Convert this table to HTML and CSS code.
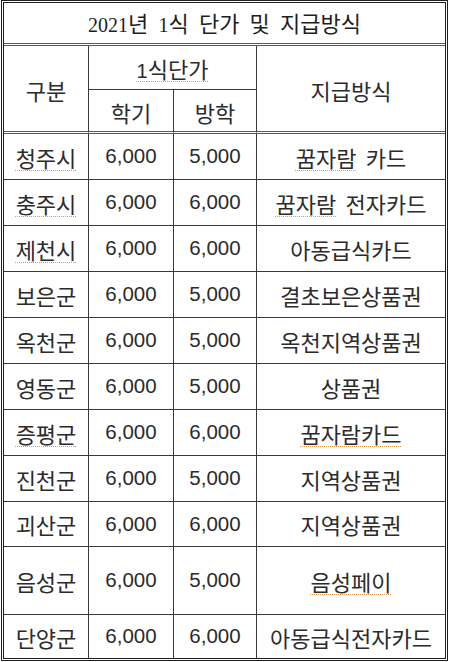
FILE: index.html
```html
<!DOCTYPE html>
<html lang="ko">
<head>
<meta charset="utf-8">
<title>2021년 1식 단가 및 지급방식</title>
<link rel="stylesheet" href="styles.css">
</head>
<body>
<div class="sheet">
  <div class="cell title"><span class="t"><span class="d">2021</span>년 <span class="d">1</span>식 단가 및 지급방식</span></div>
  <div class="cell head c1 span2r"><span>구분</span></div>
  <div class="cell head c23 sub"><span class="sp"><span class="n">1</span>식단가</span></div>
  <div class="cell head c4 span2r last"><span>지급방식</span></div>
  <div class="cell head c2 r3 hb"><span>학기</span></div>
  <div class="cell head c3 r3 hb"><span>방학</span></div>

  <div class="cell"><span class="sp">청주시</span></div>
  <div class="cell num">6,000</div>
  <div class="cell num">5,000</div>
  <div class="cell last"><span><span class="sp">꿈자람</span> 카드</span></div>

  <div class="cell"><span class="sp">충주시</span></div>
  <div class="cell num">6,000</div>
  <div class="cell num">6,000</div>
  <div class="cell last"><span><span class="sp">꿈자람</span> 전자카드</span></div>

  <div class="cell"><span class="sp">제천시</span></div>
  <div class="cell num">6,000</div>
  <div class="cell num">6,000</div>
  <div class="cell last"><span>아동급식카드</span></div>

  <div class="cell"><span>보은군</span></div>
  <div class="cell num">6,000</div>
  <div class="cell num">5,000</div>
  <div class="cell last"><span>결초보은상품권</span></div>

  <div class="cell"><span>옥천군</span></div>
  <div class="cell num">6,000</div>
  <div class="cell num">5,000</div>
  <div class="cell last"><span>옥천지역상품권</span></div>

  <div class="cell"><span>영동군</span></div>
  <div class="cell num">6,000</div>
  <div class="cell num">5,000</div>
  <div class="cell last"><span>상품권</span></div>

  <div class="cell"><span class="sp">증평군</span></div>
  <div class="cell num">6,000</div>
  <div class="cell num">6,000</div>
  <div class="cell last"><span class="sp">꿈자람카드</span></div>

  <div class="cell"><span>진천군</span></div>
  <div class="cell num">6,000</div>
  <div class="cell num">5,000</div>
  <div class="cell last"><span>지역상품권</span></div>

  <div class="cell"><span>괴산군</span></div>
  <div class="cell num">6,000</div>
  <div class="cell num">6,000</div>
  <div class="cell last"><span>지역상품권</span></div>

  <div class="cell"><span>음성군</span></div>
  <div class="cell num">6,000</div>
  <div class="cell num">5,000</div>
  <div class="cell last"><span class="sp">음성페이</span></div>

  <div class="cell bottom"><span>단양군</span></div>
  <div class="cell bottom num">6,000</div>
  <div class="cell bottom num">6,000</div>
  <div class="cell bottom last"><span>아동급식전자카드</span></div>
</div>
</body>
</html>
```
FILE: styles.css
```css
html, body {
  margin: 0;
  padding: 0;
  background: #ffffff;
}

.sheet {
  box-sizing: border-box;
  margin-left: 1px;
  width: 447px;
  height: 661px;
  border: 3px double #1e1e1e;
  display: grid;
  grid-template-columns: 85px 85px 83px 1fr;
  grid-template-rows: 43px 44px 44px repeat(8, 46px) 45px 68px 43px;
  font-family: "Noto Sans CJK KR", "Liberation Sans", sans-serif;
  font-size: 22px;
  color: #2b2b2b;
}

.cell {
  box-sizing: border-box;
  display: flex;
  align-items: center;
  justify-content: center;
  border-right: 1px solid #3a3a3a;
  border-bottom: 1px solid #3a3a3a;
  line-height: 1;
  word-spacing: 3px;
  white-space: nowrap;
}

.cell.num {
  font-family: "Liberation Sans", sans-serif;
  font-size: 20.5px;
}

.n {
  font-family: "Liberation Sans", sans-serif;
  font-size: 20px;
}

.cell.last {
  border-right: none;
}

.cell.bottom {
  border-bottom: none;
}

.title {
  grid-column: 1 / 5;
  border-right: none;
  border-bottom: 3px double #5a5a5a;
  color: #1e1e1e;
}

.t {
  word-spacing: 4px;
}

.d {
  font-family: "Liberation Serif", serif;
  font-size: 20px;
}

.head {
  padding-top: 2px;
}

.span2r {
  grid-row: 2 / 4;
  border-bottom: 3px double #5a5a5a;
}

.c1 { grid-column: 1; }
.c23 { grid-column: 2 / 4; grid-row: 2; }
.c4 { grid-column: 4; }
.c2 { grid-column: 2; }
.c3 { grid-column: 3; }
.r3 { grid-row: 3; }

.hb {
  border-bottom: 3px double #5a5a5a;
}

.sp {
  text-decoration-line: underline;
  text-decoration-style: dotted;
  text-decoration-color: #e59a4a;
  text-decoration-thickness: 1px;
  text-underline-offset: 3px;
}
```
